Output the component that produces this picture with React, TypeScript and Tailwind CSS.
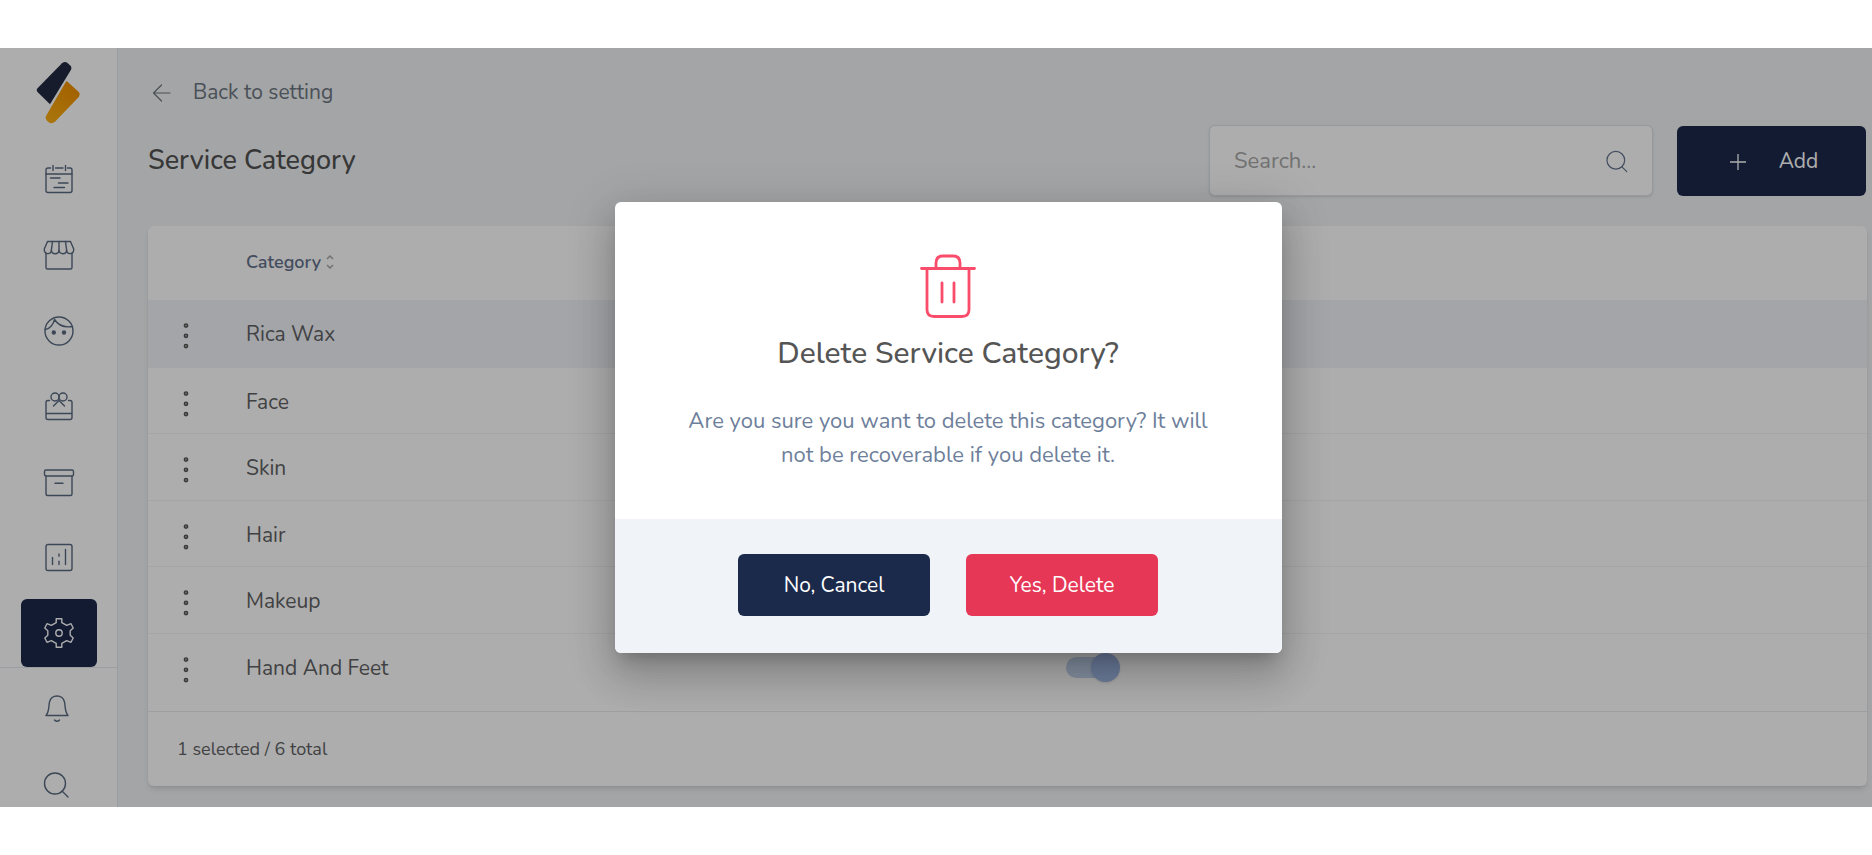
import type { ReactNode } from "react";

function Icon({ children, size = 32 }: { children: ReactNode; size?: number }) {
  return (
    <svg width={size} height={size} viewBox="0 0 32 32" fill="none" stroke="currentColor" strokeWidth="1.4" strokeLinecap="round" strokeLinejoin="round" aria-hidden="true">
      {children}
    </svg>
  );
}

const searchPaths = (
  <>
    <circle cx="14" cy="14.5" r="10.5" />
    <path d="M21 22 L27 28" />
  </>
);

const navItems: { label: string; icon: ReactNode }[] = [
  {
    label: "Calendar",
    icon: (
      <>
        <path d="M7.5 5 H5 A2 2 0 0 0 3 7 V27.5 A2 2 0 0 0 5 29.500 H27 A2 2 0 0 0 29 27.500 V7 A2 2 0 0 0 27 5 H24.5 M12.5 5 H20" />
        <path d="M10 2.5 V7.5 M22.500 2.5 V7.500 M3 11 H29 M7.500 15 H17 M15.500 20 H25 M11 24.500 H21.500" />
      </>
    ),
  },
  {
    label: "Store",
    icon: (
      <>
        <path d="M4.5 2.500 H27.500 L30.700 10 C31 16 24 16 23.600 11 C23.600 16 16 16 16 11 C16 16 8.400 16 8.400 11 C8 16 1 16 1.300 10 Z" />
        <path d="M9.500 2.500 L8.400 11 M16 2.500 V11 M22.500 2.500 L23.600 11 M3 14.500 V28.500 A1.500 1.500 0 0 0 4.500 30 H27.500 A1.500 1.500 0 0 0 29 28.500 V14.500" />
      </>
    ),
  },
  {
    label: "Customers",
    icon: (
      <>
        <circle cx="16" cy="16" r="14" />
        <path d="M2.200 14.500 C7 14 10.500 9 11.500 4.500 C15 10 20 13 29.500 11.500" />
        <circle cx="10.800" cy="17.500" r="1.500" fill="currentColor" />
        <circle cx="21" cy="17.500" r="1.500" fill="currentColor" />
      </>
    ),
  },
  {
    label: "Gifts",
    icon: (
      <>
        <path d="M6.500 9.500 H5 A2 2 0 0 0 3 11.500 V26.500 A2 2 0 0 0 5 28.500 H27 A2 2 0 0 0 29 26.500 V11.500 A2 2 0 0 0 27 9.500 H25.500 M3 22.500 H29" />
        <circle cx="12" cy="6" r="4" />
        <circle cx="20" cy="6" r="4" />
        <path d="M16 9.500 L10.500 15 M16 9.500 L21.500 15" />
      </>
    ),
  },
  {
    label: "Products",
    icon: (
      <>
        <rect x="1.500" y="3" width="29" height="6" rx="1.500" />
        <path d="M3 9 V27 A1.500 1.500 0 0 0 4.500 28.500 H27.500 A1.500 1.500 0 0 0 29 27 V9 M12 16.300 H20" />
      </>
    ),
  },
  {
    label: "Reports",
    icon: (
      <>
        <rect x="3" y="1.500" width="26" height="26" rx="2" />
        <path d="M9.500 14.500 V21.500 M16 11 V13.300 M16 18.200 V21.500 M22.500 6.500 V21.500" />
      </>
    ),
  },
];

function Sidebar() {
  return (
    <aside className="flex w-[118px] shrink-0 flex-col border-r border-[#e3e8ee] bg-white text-[#5a6a80]">
      <a href="#home" aria-label="Home" className="flex h-[93px] shrink-0 items-start justify-center pt-[13px]">
        <svg width="45" height="64" viewBox="0 0 45 64" aria-hidden="true">
          <defs>
            <linearGradient id="amber" x1="0" y1="1" x2="0.6" y2="0">
              <stop offset="0" stopColor="#fbb016" />
              <stop offset="1" stopColor="#f09000" />
            </linearGradient>
          </defs>
          <path d="M26 2.300 Q29 -0.200 31.500 2 L34.500 4.800 Q36 6.500 35 8.700 L14 43.300 L1.500 31 Q0 29 1.500 27.300 Z" fill="#212a40" />
          <path d="M31 20.300 L43 31.300 Q44.800 33.500 43 35.700 L19 60.800 Q16 63.300 13 61.500 L10.500 59.300 Q8.800 57.500 10 55 L29.500 21.500 Q30.300 20 31 20.300 Z" fill="url(#amber)" />
        </svg>
      </a>
      <nav className="flex shrink-0 flex-col">
        {navItems.map((item) => (
          <a key={item.label} href="#nav" aria-label={item.label} className="flex h-[76px] items-center justify-center">
            <Icon>{item.icon}</Icon>
          </a>
        ))}
        <a href="#settings" aria-label="Settings" className="mt-[2px] mr-5 ml-[21px] flex h-[68px] items-center justify-center rounded-md bg-[#1b294b] text-white">
          <Icon>
            <path d="M13.200 1.700 H18.800 V5.700 L23.700 8.300 L28 6.700 L30.200 11 L27.200 13.700 V18.300 L30.200 21 L28 25.300 L23.700 23.700 L18.800 26.300 V30.300 H13.200 V26.300 L8.300 23.700 L4 25.300 L1.800 21 L4.800 18.300 V13.700 L1.800 11 L4 6.700 L8.300 8.300 L13.200 5.700 Z" />
            <circle cx="16" cy="16" r="3.200" />
          </Icon>
        </a>
      </nav>
      <div className="flex shrink-0 flex-col border-t border-[#e3e8ee] pt-[3px] pr-1">
        <a href="#notifications" aria-label="Notifications" className="flex h-[76px] items-center justify-center">
          <Icon>
            <path d="M5 22.500 H27 C23.500 18.500 24.500 13 23.500 9 C22.500 5 19.500 3 16 3 C12.500 3 9.500 5 8.500 9 C7.500 13 8.500 18.500 5 22.500 Z" />
            <path d="M13.500 27 Q16 29.500 18.500 27" />
          </Icon>
        </a>
        <a href="#search" aria-label="Search" className="flex h-[76px] items-center justify-center">
          <Icon>{searchPaths}</Icon>
        </a>
      </div>
    </aside>
  );
}

function Toggle({ label }: { label: string }) {
  return (
    <label className="relative flex h-[29px] w-[54px] items-center">
      <input type="checkbox" role="switch" defaultChecked aria-label={label} className="peer sr-only" />
      <span className="h-[21px] w-[50px] rounded-full bg-[#c3d4ee]" />
      <span className="absolute right-0 size-[29px] rounded-full bg-[#9fb9e6] shadow-sm" />
    </label>
  );
}

const categories = ["Rica Wax", "Face", "Skin", "Hair", "Makeup", "Hand And Feet"];

function CategoryTable() {
  return (
    <section className="overflow-hidden rounded-md bg-white shadow-md">
      <table className="w-full table-fixed border-collapse text-left text-[21px] text-[#5f6164]">
        <colgroup>
          <col className="w-[98px]" />
          <col className="w-[820px]" />
          <col />
        </colgroup>
        <thead>
          <tr className="h-[74px] text-[18px] text-[#64728c]">
            <td />
            <th className="pb-[2px] font-semibold">
              <button type="button" className="flex items-center gap-1">
                Category
                <svg width="10" height="16" viewBox="0 0 10 16" fill="none" stroke="#a5a5a5" strokeWidth="1.500" aria-hidden="true">
                  <path d="M2 5 L5 2 L8 5 M2 11 L5 14 L8 11" />
                </svg>
              </button>
            </th>
            <td />
          </tr>
        </thead>
        <tbody className="border-b border-[#e6e9ee]">
          {categories.map((name) => (
            <tr key={name} className="group h-[67px] border-b border-[#f4f4f4] align-top first:bg-[#f1f4f9] even:h-[66px] last:border-b-0">
              <td className="pt-[20px] pl-[28px]">
                <button type="button" aria-label={"Actions for " + name} className="block">
                  <svg width="20" height="30" viewBox="0 0 20 30" fill="#999" stroke="#555" strokeWidth="1.300" aria-hidden="true">
                    <circle cx="10" cy="5.500" r="1.700" />
                    <circle cx="10" cy="15.800" r="1.700" />
                    <circle cx="10" cy="26.100" r="1.700" />
                  </svg>
                </button>
              </td>
              <td className="pt-[19px] leading-[30px] group-last:pb-7">{name}</td>
              <td className="pt-[19px]">
                <Toggle label={"Status of " + name} />
              </td>
            </tr>
          ))}
        </tbody>
      </table>
      <p className="px-[29px] py-[22px] text-[18px] leading-[30px] text-[#5f6164]">1 selected / 6 total</p>
    </section>
  );
}

function DeleteDialog() {
  return (
    <div
      role="dialog"
      aria-modal="true"
      aria-labelledby="dialog-title"
      className="w-[667px] overflow-hidden rounded-md bg-white text-center shadow-[0_11px_15px_-7px_rgba(0,0,0,0.2),0_24px_38px_3px_rgba(0,0,0,0.14),0_9px_46px_8px_rgba(0,0,0,0.12)]"
    >
      <div className="flex flex-col items-center px-16 pt-[50px] pb-[47px]">
        <svg width="58" height="68" viewBox="0 0 58 68" fill="none" stroke="#fa4d6c" strokeWidth="2.800" strokeLinecap="round" strokeLinejoin="round" aria-hidden="true">
          <path d="M2.500 16.500 H55.500 M8 16.500 V57.500 Q8 64.500 15 64.500 H43 Q50 64.500 50 57.500 V16.500 M17 16.500 V11 Q17 4 24 4 H34 Q41 4 41 11 V16.500 M23 31 V50 M35 31 V50" />
        </svg>
        <h2 id="dialog-title" className="mt-4 text-[30px] leading-[36px] font-medium text-[#555]">
          Delete Service Category?
        </h2>
        <p className="mt-[32px] text-[22px] leading-[34px] text-[#6e7f9b]">
          Are you sure you want to delete this category? It will not be recoverable if you delete it.
        </p>
      </div>
      <div className="flex justify-center gap-9 bg-[#f0f4f9] pt-[35px] pb-[37px] text-[21px] text-white">
        <button type="button" className="h-[62px] w-[192px] rounded-md bg-[#1b294b] pt-[2px]">No, Cancel</button>
        <button type="button" className="h-[62px] w-[192px] rounded-md bg-[#e63757] pt-[2px]">Yes, Delete</button>
      </div>
    </div>
  );
}

export default function App() {
  return (
    <div className="flex h-screen flex-col bg-white py-12 font-['Nunito','Lato',sans-serif]">
      <div className="relative flex min-h-0 flex-1 overflow-hidden bg-[#f1f3f6]">
        <Sidebar />
        <main className="min-w-0 flex-1 pt-7 pr-[5px] pl-[30px]">
          <a href="#back" className="flex h-[34px] w-fit items-center gap-[21px] pl-[2px] text-[21px] text-[#6d7680]">
            <svg width="22" height="22" viewBox="0 0 22 22" fill="none" stroke="currentColor" strokeWidth="1.200" strokeLinecap="round" strokeLinejoin="round" aria-hidden="true">
              <path d="M20 11 H3.500 M11.500 3 L3.500 11 L11.500 19" />
            </svg>
            Back to setting
          </a>
          <div className="mt-[15px] mb-[30px] flex items-center pr-px">
            <h1 className="flex-1 pt-[2px] text-[27px] font-medium text-[#525252]">Service Category</h1>
            <div className="flex h-[71px] w-[444px] items-center rounded-md border border-[#dde2e9] bg-white pt-px pr-[21px] pl-6 shadow-sm">
              <input type="text" aria-label="Search categories" placeholder="Search..." className="min-w-0 flex-1 bg-transparent text-[22px] outline-none placeholder:text-[#a8a8a8]" />
              <span className="text-[#64728c]">
                <Icon size={27}>{searchPaths}</Icon>
              </span>
            </div>
            <button type="button" className="ml-6 flex h-[70px] w-[189px] items-center justify-center gap-8 rounded-md bg-[#1b294b] pt-[2px] pl-1 text-[21px] text-white">
              <svg width="18" height="18" viewBox="0 0 18 18" stroke="currentColor" strokeWidth="1.300" aria-hidden="true">
                <path d="M1 9 H17 M9 1 V17" />
              </svg>
              Add
            </button>
          </div>
          <CategoryTable />
        </main>
        <div className="absolute inset-0 flex items-center justify-center bg-black/32 pl-6">
          <DeleteDialog />
        </div>
      </div>
    </div>
  );
}
